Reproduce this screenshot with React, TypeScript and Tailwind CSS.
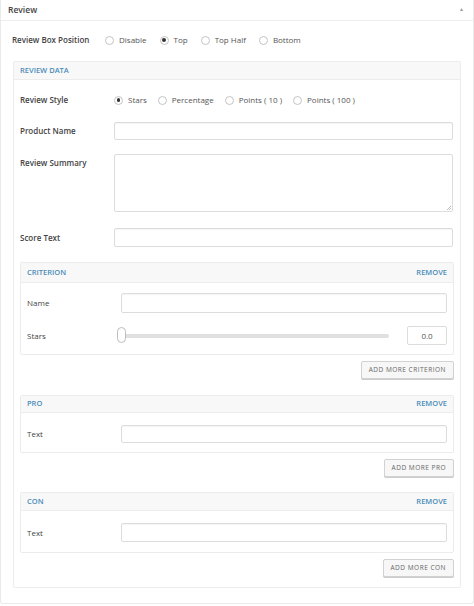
import React from "react";

const labelCls = "w-[94px] shrink-0 text-[8px] font-semibold text-[#444]";
const inputCls = "flex-1 h-[18px] rounded-[2px] border border-[#dcdcdc] bg-white shadow-[inset_0_1px_1px_rgba(0,0,0,0.04)]";

function Radio({ label, checked }: { label: string; checked?: boolean }) {
  return (
    <div className="flex items-center gap-[5px]">
      <span className="flex h-[9px] w-[9px] items-center justify-center rounded-full border border-[#c4c4c4] bg-white">
        {checked && <span className="h-[3.5px] w-[3.5px] rounded-full bg-[#333]" />}
      </span>
      <span className="text-[8px] text-[#555]">{label}</span>
    </div>
  );
}

function SubBox({
  title,
  headerH,
  children,
  className,
}: {
  title: string;
  headerH: string;
  children: React.ReactNode;
  className?: string;
}) {
  return (
    <div className={`rounded-[2px] border border-[#ececec] ${className ?? ""}`}>
      <div className={`flex items-center justify-between border-b border-[#ececec] bg-[#f8f8f8] px-[6px] ${headerH}`}>
        <span className="text-[7.5px] font-semibold text-[#4a8cb8]">{title}</span>
        <span className="text-[7.5px] font-semibold text-[#4a8cb8]">REMOVE</span>
      </div>
      {children}
    </div>
  );
}

function AddButton({ label }: { label: string }) {
  return (
    <div className="flex justify-end">
      <button className="h-[18px] rounded-[2px] border border-[#d2d2d2] bg-[#f7f7f7] px-[7px] text-[6.5px] tracking-[0.5px] text-[#666] shadow-[0_1px_0_#ccc]">
        {label}
      </button>
    </div>
  );
}

export default function App() {
  return (
    <div className="h-[606px] w-[474px] bg-white font-['Open_Sans',sans-serif]">
      <div className="h-[604px] rounded-b-[3px] border-x border-b border-[#eaeaea]">
        {/* Header */}
        <div className="flex h-[21px] items-center justify-between border-b border-[#eeeeee] pl-[7px] pr-[9px]">
          <span className="text-[8.5px] font-semibold text-[#444]">Review</span>
          <span className="text-[5px] text-[#999]">▲</span>
        </div>

        <div className="px-[12px] pt-[9px]">
          <div className="flex h-[20px] items-center">
            <span className="-ml-[1px] w-[93px] shrink-0 text-[8px] font-semibold text-[#444]">Review Box Position</span>
            <div className="flex items-center gap-[13px]">
              <Radio label="Disable" />
              <Radio label="Top" checked />
              <Radio label="Top Half" />
              <Radio label="Bottom" />
            </div>
          </div>

          {/* Review data box */}
          <div className="mt-[11px] rounded-[2px] border border-[#ececec]">
            <div className="flex h-[18px] items-center border-b border-[#ececec] bg-[#f8f8f8] px-[6px]">
              <span className="text-[7.5px] font-semibold text-[#4a8cb8]">REVIEW DATA</span>
            </div>

            <div className="flex flex-col px-[6px] pb-[10px] pt-[11px]">
              <div className="flex h-[18px] items-center">
                <span className={labelCls}>Review Style</span>
                <div className="flex items-center gap-[11px]">
                  <Radio label="Stars" checked />
                  <Radio label="Percentage" />
                  <Radio label="Points ( 10 )" />
                  <Radio label="Points ( 100 )" />
                </div>
              </div>

              <div className="mt-[13px] flex items-center pr-[1px]">
                <span className={labelCls}>Product Name</span>
                <div className={inputCls} />
              </div>

              <div className="mt-[14px] flex items-start pr-[1px]">
                <span className={`${labelCls} pt-[3px]`}>Review Summary</span>
                <div className="relative h-[58px] flex-1 rounded-[2px] border border-[#dcdcdc] bg-white">
                  <svg className="absolute bottom-[1px] right-[1px]" width="5" height="5" viewBox="0 0 5 5">
                    <path d="M1 5L5 1M3 5L5 3" stroke="#999" strokeWidth="0.6" />
                  </svg>
                </div>
              </div>

              <div className="mt-[16px] flex items-center pr-[1px]">
                <span className={labelCls}>Score Text</span>
                <div className={`${inputCls} h-[19px]`} />
              </div>

              {/* Criterion */}
              <SubBox title="CRITERION" headerH="h-[20px]" className="mt-[15px]">
                <div className="flex flex-col px-[6px] pb-[9px] pt-[10px]">
                  <div className="flex items-center">
                    <span className="w-[94px] shrink-0 text-[8px] text-[#444]">Name</span>
                    <div className={`${inputCls} h-[20px]`} />
                  </div>
                  <div className="mt-[13px] flex items-center">
                    <span className="w-[90px] shrink-0 text-[8px] text-[#444]">Stars</span>
                    <div className="relative flex h-[19px] flex-1 items-center">
                      <div className="h-[4px] w-[272px] rounded-full bg-[#e0e0e0]" />
                      <div className="absolute left-0 top-[1px] h-[16px] w-[9px] rounded-full border border-[#bdbdbd] bg-white" />
                    </div>
                    <div className="flex h-[19px] w-[40px] items-center justify-center rounded-[2px] border border-[#dcdcdc] text-[8px] text-[#555]">
                      0.0
                    </div>
                  </div>
                </div>
              </SubBox>
              <div className="mt-[6px]">
                <AddButton label="ADD MORE CRITERION" />
              </div>

              {/* Pro */}
              <SubBox title="PRO" headerH="h-[17px]" className="mt-[16px]">
                <div className="flex items-center px-[6px] pb-[9px] pt-[12px]">
                  <span className="w-[94px] shrink-0 text-[8px] text-[#444]">Text</span>
                  <div className={inputCls} />
                </div>
              </SubBox>
              <div className="mt-[6px]">
                <AddButton label="ADD MORE PRO" />
              </div>

              {/* Con */}
              <SubBox title="CON" headerH="h-[18px]" className="mt-[15px]">
                <div className="flex items-center px-[6px] pb-[10px] pt-[12px]">
                  <span className="w-[94px] shrink-0 text-[8px] text-[#444]">Text</span>
                  <div className={`${inputCls} h-[19px]`} />
                </div>
              </SubBox>
              <div className="mt-[6px]">
                <AddButton label="ADD MORE CON" />
              </div>
            </div>
          </div>
        </div>
      </div>
    </div>
  );
}
